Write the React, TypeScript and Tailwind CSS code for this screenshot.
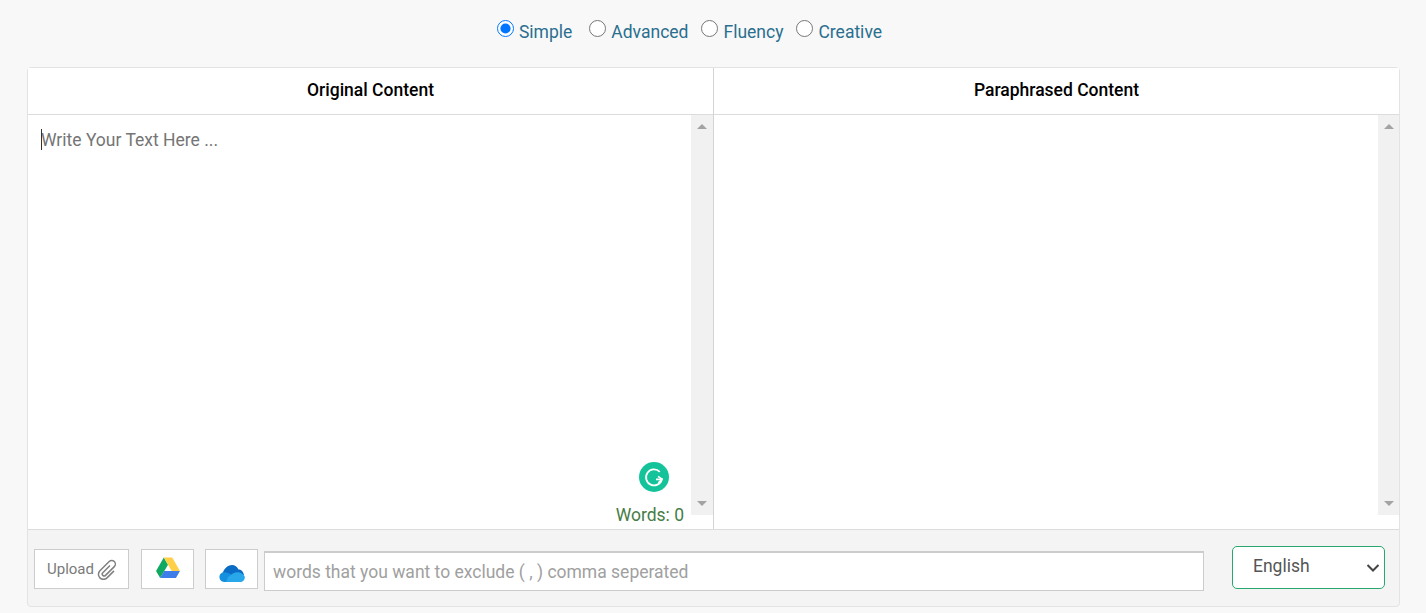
const modes = [
	{ name: 'Simple', gap: 'ml-0', checked: true },
	{ name: 'Advanced', gap: 'ml-[17px]', checked: false },
	{ name: 'Fluency', gap: 'ml-[13px]', checked: false },
	{ name: 'Creative', gap: 'ml-[13px]', checked: false },
];

const ScrollTrack = ({ width }: { width: string }) => (
	<div className={`flex h-[400px] shrink-0 flex-col items-center justify-between bg-[#f1f1f1] pt-[9px] pb-[9px] ${width}`}>
		<div className="h-0 w-0 border-x-[5px] border-b-[5px] border-x-transparent border-b-[#a3a3a3]" />
		<div className="h-0 w-0 border-x-[5px] border-t-[5px] border-x-transparent border-t-[#a3a3a3]" />
	</div>
);

const PaperclipIcon = () => (
	<svg width="20" height="21" viewBox="0 0 20 21" className="ml-[3px] shrink-0">
		<path
			d="M13 6.5 L5.8 13.7 a1.9 1.9 0 0 0 2.7 2.7 L17.3 7.6 a3.6 3.6 0 0 0 -5.1 -5.1 L2.9 11.8 a5 5 0 0 0 7.1 7.1 L17 11.9"
			fill="none"
			stroke="#808080"
			strokeWidth="1.5"
		/>
	</svg>
);

const DriveIcon = () => (
	<svg width="26" height="22" viewBox="0 0 26 23">
		<path d="M8.6 0.5 L0.5 14.6 L4.8 22 L13 8 Z" fill="#11a861" />
		<path d="M8.6 0.5 H17.4 L25.5 14.6 H16.9 Z" fill="#ffcf48" />
		<path d="M4.8 22 H21.3 L25.5 14.6 H9 Z" fill="#3f7ee8" />
	</svg>
);

const OneDriveIcon = () => (
	<svg width="26" height="18" viewBox="0 0 26 18">
		<path d="M3.5 10 C4.5 5 8.5 1 13 1 C16 1 18 2.5 19.5 5.5 C22 5.5 24 7 25 11 L12 15 Z" fill="#0a6cc4" />
		<path d="M3.5 8.5 C1 9.5 0 11.5 0.5 14 C1 16.5 3 18 5.5 18 H14 L13 11 C10 9 6 8 3.5 8.5 Z" fill="#1490df" />
		<path d="M7 18 H22 C24.5 18 26.5 15 25.5 12 C23 8.5 18 7 14 9.5 L9 13 Z" fill="#28a8ea" />
	</svg>
);

const GrammarlyIcon = () => (
	<svg width="30" height="30" viewBox="0 0 30 30">
		<circle cx="15" cy="15" r="15" fill="#15c39a" />
		<path
			d="M20.8 9.8 A8 8 0 1 0 22.8 17.4 H17"
			fill="none"
			stroke="#ffffff"
			strokeWidth="1.8"
		/>
		<path d="M19.4 20.8 L23 17.2 L19 14.4" fill="none" stroke="#ffffff" strokeWidth="1.6" />
	</svg>
);

export default function App() {
	return (
		<div className="h-[613px] overflow-hidden bg-[#f8f8f8] font-['Roboto',sans-serif]">
			<div className="flex h-[67px] items-start justify-center pt-[19px] pr-[47px]">
				{modes.map((mode) => (
					<label key={mode.name} className={`flex items-start ${mode.gap}`}>
						<input
							type="radio"
							name="mode"
							defaultChecked={mode.checked}
							className="mt-[1px] mr-[5px] h-[17px] w-[17px]"
						/>
						<span className="text-[17.5px] leading-[27px] text-[#2a6f8f]">{mode.name}</span>
					</label>
				))}
			</div>

			<div className="mx-[27px] h-[540px] w-[1373px] rounded-[4px] border border-[#e3e3e3] bg-[#f4f4f4]">
				<div className="flex h-[462px] border-b border-[#dcdcdc]">
					<section className="flex w-[686px] flex-col border-r border-[#d4d4d4] bg-white">
						<h2 className="flex h-[47px] items-center justify-center border-b border-[#dcdcdc] pb-[2px] text-[17.5px] font-medium text-black">
							Original Content
						</h2>
						<div className="flex flex-1">
							<div className="relative flex-1">
								<textarea
									placeholder="Write Your Text Here ..."
									className="h-[400px] w-full resize-none px-[13px] py-[12px] text-[17.5px] leading-[27px] outline-none placeholder:text-[#757575]"
								/>
								<div className="absolute top-[14px] left-[13px] h-[21px] w-px bg-[#333333]" />
								<div className="absolute top-[347px] right-[22px]">
									<GrammarlyIcon />
								</div>
								<span className="absolute top-[387px] right-[7px] text-[17.5px] leading-[27px] text-[#467c46]">
									Words: 0
								</span>
							</div>
							<ScrollTrack width="w-[22px]" />
						</div>
					</section>
					<section className="flex flex-1 flex-col bg-white">
						<h2 className="flex h-[47px] items-center justify-center border-b border-[#dcdcdc] pb-[2px] text-[17.5px] font-medium text-black">
							Paraphrased Content
						</h2>
						<div className="flex flex-1">
							<div className="flex-1" />
							<ScrollTrack width="w-[21px]" />
						</div>
					</section>
				</div>

				<div className="flex items-start pt-[19px] pl-[6px]">
					<button className="flex h-[40px] w-[95px] items-center justify-center border border-[#cccccc] bg-white pt-[1px] pl-[1px] text-[15px] text-[#7a7a7a]">
						Upload
						<PaperclipIcon />
					</button>
					<button className="ml-[12px] flex h-[40px] w-[53px] items-center justify-center border border-[#cccccc] bg-white pb-[2px]">
						<DriveIcon />
					</button>
					<button className="ml-[11px] flex h-[40px] w-[53px] items-center justify-center border border-[#cccccc] bg-white pt-[8px]">
						<OneDriveIcon />
					</button>
					<input
						placeholder="words that you want to exclude ( , ) comma seperated"
						className="mt-[2px] ml-[6px] h-[40px] w-[940px] border border-t-2 border-[#cccccc] bg-white px-[8px] text-[17.5px] outline-none placeholder:text-[#a0a0a0]"
					/>
					<div className="relative mt-[-3px] ml-[28px] h-[43px] w-[153px]">
						<select className="h-full w-full appearance-none rounded-[5px] border border-[#28a76f] bg-white pb-[2px] pl-[20px] text-[17.5px] text-[#555555] outline-none">
							<option>English</option>
						</select>
						<svg width="16" height="16" viewBox="0 0 16 16" className="pointer-events-none absolute top-[14px] right-[4px]">
							<path d="M2.5 5 L8 10.5 L13.5 5" fill="none" stroke="#444444" strokeWidth="2" />
						</svg>
					</div>
				</div>
			</div>
		</div>
	);
}
